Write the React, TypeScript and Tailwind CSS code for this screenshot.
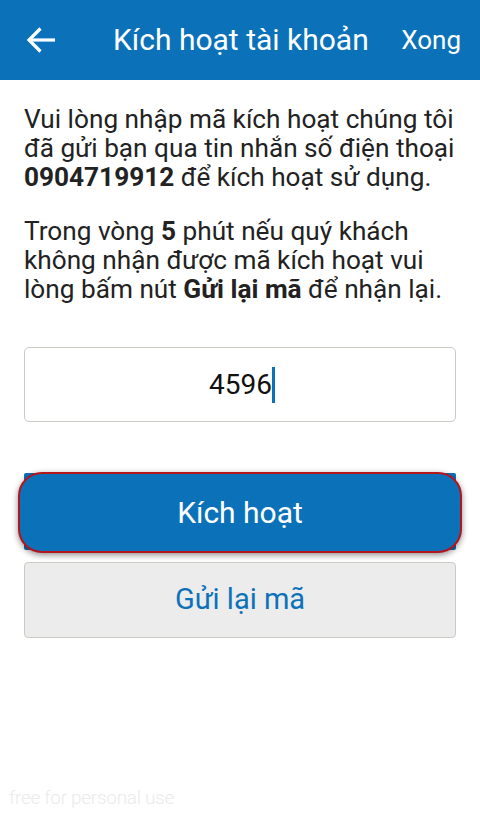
export default function App() {
  return (
    <div className="relative w-[480px] h-[816px] bg-white overflow-hidden" style={{ fontFamily: 'Roboto, "Noto Sans", sans-serif' }}>
      {/* header */}
      <div className="h-[80px] bg-[#0b72b9] flex items-center text-white">
        <div className="w-[82px] pl-[26px] flex items-center">
          <svg width="30" height="28" viewBox="0 0 30 28" fill="none" stroke="white" strokeWidth="3.2">
            <path d="M3 14 H29" />
            <path d="M14.5 2.5 L3 14 L14.5 25.5" />
          </svg>
        </div>
        <div className="flex-1 pl-[31px] text-[30px] leading-none">Kích hoạt tài khoản</div>
        <div className="pr-[19px] text-[26px] leading-none">Xong</div>
      </div>

      <div className="px-6 pt-[25px] text-[26.2px] leading-[29px] text-[#222] whitespace-nowrap">
        <p>
          Vui lòng nhập mã kích hoạt chúng tôi
          <br />
          đã gửi bạn qua tin nhắn số điện thoại
          <br />
          <b>0904719912</b> để kích hoạt sử dụng.
        </p>
        <p className="mt-[25px]">
          Trong vòng <b>5</b> phút nếu quý khách
          <br />
          không nhận được mã kích hoạt vui
          <br />
          lòng bấm nút <b>Gửi lại mã</b> để nhận lại.
        </p>
      </div>

      <div className="px-6 mt-[43px]">
        <div className="h-[75px] border border-[#cbcbc3] rounded-[5px] flex items-center justify-center">
          <span className="text-[28px] text-[#111] pl-[4px]">4596</span>
          <span className="w-[3px] h-[36px] bg-[#0b72b9]" />
        </div>
      </div>

      <div className="px-6 mt-[51px]">
        <div className="relative h-[77px] bg-[#0b72b9] rounded-[2px]">
          <div className="absolute -left-[6px] -right-[6px] -top-px -bottom-[3px] bg-[#0b72b9] border-[2.5px] border-[#b4141c] rounded-[24px] shadow-[0_2px_6px_rgba(0,0,0,0.45)] flex items-center justify-center">
            <span className="text-white text-[30px]">Kích hoạt</span>
          </div>
        </div>
        <div className="mt-[12px] h-[76px] bg-[#ececec] border border-[#cbcbc3] rounded-[4px] flex items-center justify-center">
          <span className="text-[#0b72b9] text-[29px]">Gửi lại mã</span>
        </div>
      </div>

      <div className="absolute left-[9px] top-[784px] text-[19px] text-[#ebebeb] font-light tracking-[-0.3px]">
        free for personal use
      </div>
    </div>
  );
}
